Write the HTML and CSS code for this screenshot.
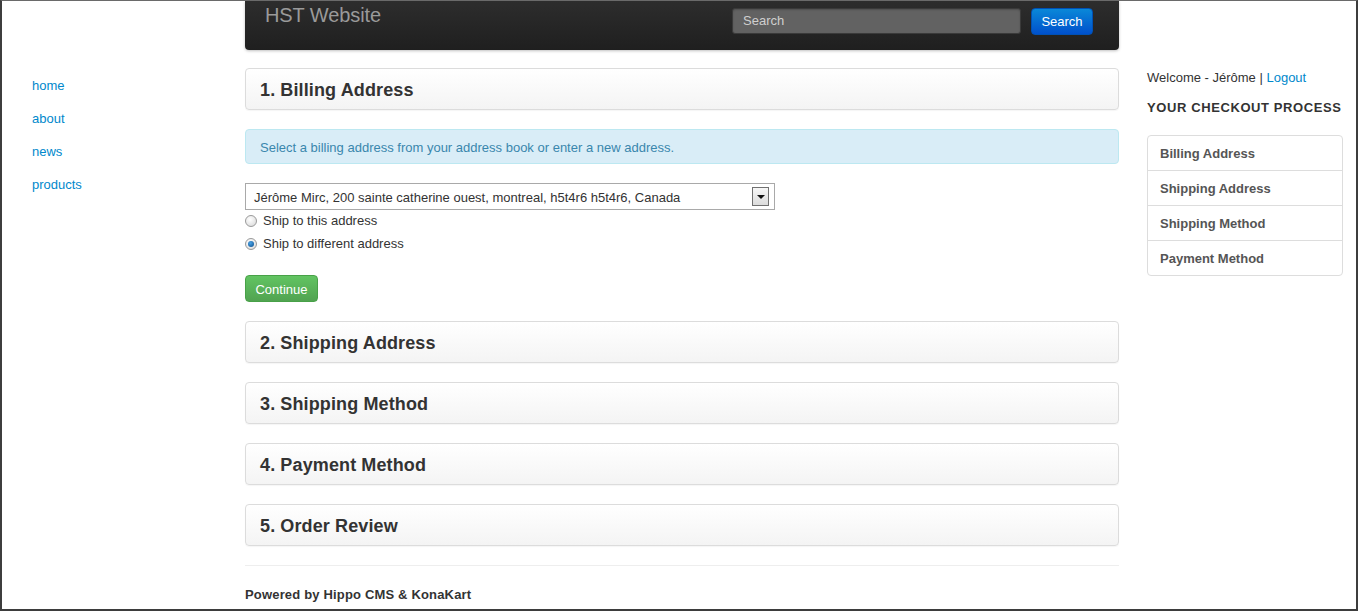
FILE: index.html
```html
<!DOCTYPE html>
<html lang="en">
<head>
<meta charset="utf-8">
<title>HST Website - Checkout</title>
<link rel="stylesheet" href="styles.css">
</head>
<body>
<div class="frame">
  <div class="layout">
    <nav class="sidenav">
      <a href="#">home</a>
      <a href="#">about</a>
      <a href="#">news</a>
      <a href="#">products</a>
    </nav>

    <main class="main">
      <header class="navbar">
        <span class="brand">HST Website</span>
        <form class="search">
          <span class="search-input">Search</span>
          <span class="btn btn-primary">Search</span>
        </form>
      </header>

      <section class="step"><h2>1. Billing Address</h2></section>

      <div class="alert">Select a billing address from your address book or enter a new address.</div>

      <div class="select">
        <span class="select-text">Jérôme Mirc, 200 sainte catherine ouest, montreal, h5t4r6 h5t4r6, Canada</span>
        <span class="select-arrow"><span class="tri"></span></span>
      </div>
      <div class="radios">
        <label class="radio"><span class="dot"></span>Ship to this address</label>
        <label class="radio"><span class="dot checked"></span>Ship to different address</label>
      </div>
      <span class="btn btn-success">Continue</span>

      <section class="step"><h2>2. Shipping Address</h2></section>
      <section class="step"><h2>3. Shipping Method</h2></section>
      <section class="step"><h2>4. Payment Method</h2></section>
      <section class="step"><h2>5. Order Review</h2></section>

      <footer class="footer">Powered by Hippo CMS &amp; KonaKart</footer>
    </main>

    <aside class="side">
      <p class="welcome">Welcome - Jérôme | <a href="#">Logout</a></p>
      <h3 class="side-title">YOUR CHECKOUT PROCESS</h3>
      <ul class="process">
        <li>Billing Address</li>
        <li>Shipping Address</li>
        <li>Shipping Method</li>
        <li>Payment Method</li>
      </ul>
    </aside>
  </div>
</div>
</body>
</html>
```

FILE: styles.css
```css
* { box-sizing: border-box; }
html, body { margin: 0; padding: 0; }
body {
  font-family: "Liberation Sans", Arial, Helvetica, sans-serif;
  font-size: 13px;
  line-height: 20px;
  color: #333;
  background: #fff;
}
a { color: #0088cc; text-decoration: none; }

.frame {
  width: 1358px;
  height: 611px;
  overflow: hidden;
  border-top: 1px solid #6a6a6a;
  border-left: 2px solid #3d3d3d;
  border-right: 2px solid #3d3d3d;
  border-bottom: 2px solid #3d3d3d;
  background: #fff;
}
.layout {
  display: flex;
  align-items: flex-start;
}

/* left nav */
.sidenav {
  width: 243px;
  flex: none;
  padding: 75px 0 0 30px;
  display: flex;
  flex-direction: column;
  gap: 13px;
}
.sidenav a { line-height: 20px; display: block; }

/* main */
.main {
  width: 874px;
  flex: none;
  display: flex;
  flex-direction: column;
  align-items: flex-start;
}
.navbar {
  width: 100%;
  height: 49px;
  background: linear-gradient(#2d2d2d, #1f1f1f);
  border-radius: 0 0 4px 4px;
  box-shadow: 0 1px 3px rgba(0,0,0,0.25);
  display: flex;
  justify-content: space-between;
  align-items: flex-start;
  padding: 0 26px 0 20px;
  margin-bottom: 18px;
}
.brand {
  color: #9a9a9a;
  font-size: 20px;
  line-height: 28px;
  padding-top: 0;
  letter-spacing: -0.1px;
}
.search {
  margin: 7px 0 0;
  display: flex;
  gap: 10px;
}
.search-input {
  width: 289px;
  height: 26px;
  background: #626262;
  border: 1px solid #3a3a3a;
  border-radius: 3px;
  box-shadow: inset 0 1px 2px rgba(0,0,0,0.2);
  color: #cfcfcf;
  padding: 0 10px;
  line-height: 24px;
}
.btn {
  display: inline-block;
  color: #fff;
  font-size: 13px;
  line-height: 25px;
  height: 27px;
  padding: 0 11px;
  border-radius: 4px;
  border: 1px solid rgba(0,0,0,0.15);
}
.btn-primary {
  width: 62px;
  text-align: center;
  padding: 0;
  background: linear-gradient(#0a88d8, #0050cc);
  border-color: #0051b5;
}
.btn-success {
  width: 73px;
  text-align: center;
  padding: 1px 0 0;
  line-height: 26px;
  overflow: hidden;
  background: linear-gradient(#62c462, #51a351);
  border-color: #48a148;
  margin-top: 22px;
  margin-bottom: 19px;
}

.step {
  width: 100%;
  height: 42px;
  border: 1px solid #dcdcdc;
  border-radius: 4px;
  background: linear-gradient(#ffffff, #f4f4f4);
  box-shadow: 0 1px 1px rgba(0,0,0,0.04);
  margin-bottom: 19px;
  padding: 2px 14px 0;
  display: flex;
  align-items: center;
}
.step h2 {
  margin: 0;
  font-size: 18px;
  font-weight: bold;
  color: #333;
  line-height: 22px;
  letter-spacing: 0.12px;
}

.alert {
  width: 100%;
  height: 35px;
  background: #d9edf7;
  border: 1px solid #bce8f1;
  border-radius: 4px;
  color: #3a87ad;
  padding: 2px 14px 0;
  line-height: 31px;
  margin-bottom: 19px;
}

.select {
  width: 530px;
  height: 27px;
  border: 1px solid #a9a9a9;
  display: flex;
  align-items: center;
  justify-content: space-between;
  padding: 0 5px 0 8px;
  color: #333;
  font-size: 13px;
}
.select-text { padding-top: 2px; }
.select-arrow {
  width: 17px;
  height: 19px;
  border: 1px solid #707070;
  background: linear-gradient(#f6f6f6, #dcdcdc);
  display: flex;
  align-items: center;
  justify-content: center;
}
.tri {
  width: 0;
  height: 0;
  border-left: 4px solid transparent;
  border-right: 4px solid transparent;
  border-top: 4px solid #111;
}

.radios {
  display: flex;
  flex-direction: column;
  gap: 3px;
}
.radio {
  display: flex;
  align-items: center;
  height: 20px;
  padding-top: 2px;
  line-height: 18px;
  color: #333;
}
.dot {
  width: 12px;
  height: 12px;
  border-radius: 50%;
  border: 1px solid #9a9a9a;
  background: radial-gradient(circle at 40% 35%, #ffffff, #d6d6d6);
  margin-right: 6px;
  display: flex;
  align-items: center;
  justify-content: center;
}
.dot.checked::after {
  content: "";
  width: 6px;
  height: 6px;
  border-radius: 50%;
  background: radial-gradient(circle at 40% 35%, #4aa3e6, #0b4c8a);
}

.footer {
  width: 100%;
  border-top: 1px solid #eeeeee;
  padding-top: 19px;
  font-weight: bold;
  color: #333;
  line-height: 20px;
  letter-spacing: 0.17px;
}

/* right column */
.side {
  width: 196px;
  flex: none;
  margin-left: 28px;
  padding-top: 67px;
}
.welcome {
  margin: 0 0 10px;
  line-height: 20px;
  color: #333;
}
.side-title {
  margin: 0 0 17px;
  font-size: 13px;
  font-weight: bold;
  line-height: 20px;
  color: #333;
  letter-spacing: 0.6px;
  white-space: nowrap;
}
.process {
  list-style: none;
  margin: 0;
  padding: 0;
  border: 1px solid #dddddd;
  border-radius: 4px;
}
.process li {
  height: 35px;
  line-height: 34px;
  padding: 1px 0 0 12px;
  font-weight: bold;
  color: #555;
  border-top: 1px solid #dddddd;
}
.process li:first-child { border-top: 0; height: 34px; }
```
